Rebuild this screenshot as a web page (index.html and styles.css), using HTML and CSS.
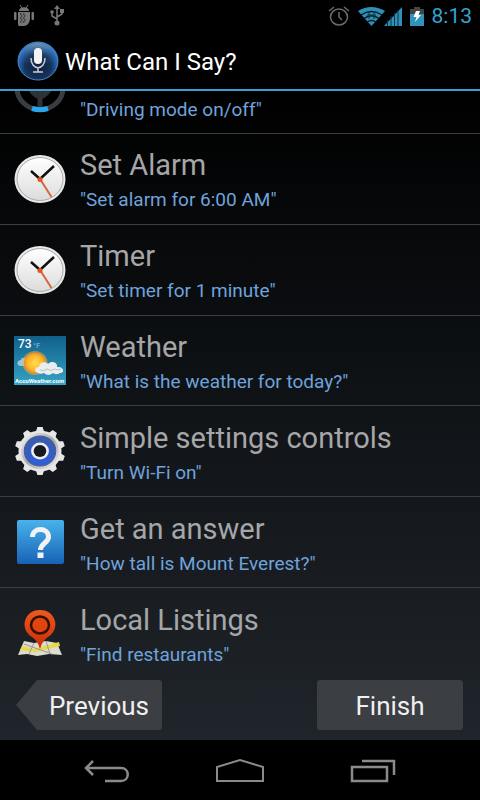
FILE: index.html
```html
<!DOCTYPE html>
<html lang="en">
<head>
    <meta charset="UTF-8">
    <meta name="viewport" content="width=device-width, initial-scale=1.0">
    <title>What Can I Say?</title>
    <link rel="stylesheet" href="styles.css">
</head>
<body>
    <div class="status-bar">
        <div class="status-left">
            <svg width="20" height="22" viewBox="0 0 20 22" fill="#777">
                <path d="M5 6c0-5 10-5 10 0z"/>
                <path d="M6 0l2 3M14 0l-2 3" stroke="#777"/>
                <rect x="0" y="7" width="2.5" height="8" rx="1"/>
                <rect x="17.500" y="7" width="2.500" height="8" rx="1"/>
                <path d="M4 7h12v6c0 5-3 8-6 8H5c-1 0-1-2-1-3z"/>
                <path d="M6 9h6M7 11h6M6 13h6M7 15h5M6 17h5" stroke="#111" stroke-dasharray="1.500 1.500"/>
            </svg>
            <svg width="14" height="21" viewBox="0 0 14 21" fill="none" stroke="#777" stroke-width="1.5">
                <path d="M7 3v15M7 14L2 11V8M7 12l5-3V6"/>
                <path d="M4 4l3-4 3 4z" fill="#777" stroke="none"/>
                <circle cx="7" cy="18" r="2.500" fill="#777" stroke="none"/>
                <circle cx="2" cy="7" r="1.800" fill="#777" stroke="none"/>
                <path d="M10 4h4v4h-4z" fill="#777" stroke="none"/>
            </svg>
        </div>
        <div class="status-right">
            <svg width="22" height="20" viewBox="0 0 22 20" fill="none" stroke="#6b6b6b" stroke-width="1.500">
                <ellipse cx="11" cy="11" rx="8.500" ry="8"/>
                <path d="M11 6v5l3 3M1 5l5-4M21 5l-5-4"/>
            </svg>
            <svg class="wifi" width="27" height="19" viewBox="0 0 27 19">
                <path d="M0 4Q13-4 27 4L13.500 19z" fill="#2f8fb5"/>
                <path d="M3 8q10.500-7 21 0M6 11.500q7.500-5.500 15 0M9 15q4.500-3 9 0" fill="none" stroke="#051820" stroke-width="1.300"/>
                <path d="M11 5v7M16 5v7M9 8h9" stroke="#0b3444" fill="none"/>
            </svg>
            <svg class="signal" width="18" height="19" viewBox="0 0 18 19">
                <path d="M0 19L18 0v19z" fill="#2f8fb5"/>
                <path d="M3.500 13v6M7 9v10M10.500 6v13M14 3v16" stroke="#0b3444"/>
            </svg>
            <svg width="14" height="19" viewBox="0 0 14 19">
                <path d="M4 0h6v2h4v5H0V2h4z" fill="#444"/>
                <path d="M0 7h14v12H0z" fill="#3193ba"/>
                <path d="M6 4h4L8.500 8H11l-6 7 1.500-5H3.500z" fill="#fff"/>
            </svg>
            <span class="clock">8:13</span>
        </div>
    </div>

    <header class="title-bar">
        <svg width="42" height="40" viewBox="0 0 42 40">
            <defs>
                <radialGradient id="micGlow" cx="50%" cy="65%" r="55%">
                    <stop offset="0" stop-color="#102038"/>
                    <stop offset=".6" stop-color="#15335c"/>
                    <stop offset="1" stop-color="#2c7fe0"/>
                </radialGradient>
                <linearGradient id="micGloss" x2="0" y2="1">
                    <stop offset="0" stop-color="#7796aa" stop-opacity=".9"/>
                    <stop offset=".6" stop-color="#34536b" stop-opacity=".2"/>
                </linearGradient>
            </defs>
            <ellipse cx="21" cy="20" rx="20" ry="19" fill="url(#micGlow)" stroke="#4a86bd"/>
            <path d="M3 20C3-4 39-4 39 20q-18 5-36 0z" fill="url(#micGloss)"/>
            <rect x="17" y="7" width="8" height="16" rx="4" fill="#f4f4f4"/>
            <path d="M14 17c0 13 14 13 14 0M21 27v4M16 31h10" fill="none" stroke="#ccd" stroke-width="1.500"/>
        </svg>
        <h1>What Can I Say?</h1>
    </header>

    <main class="screen">
        <ul class="command-list">
            <li class="command clipped">
                <svg class="icon" width="52" height="50" viewBox="0 0 52 50">
                    <ellipse cx="26" cy="25" rx="23" ry="21.500" fill="none" stroke="#3b3c3f" stroke-width="5"/>
                    <path d="M12 18h28q-1 14-14 19Q13 32 12 18z" fill="#303134"/>
                    <path d="M26 28v16" stroke="#303134" stroke-width="5"/>
                    <path d="M18 45.500q8 2.500 16 0" fill="none" stroke="#2ba6ee" stroke-width="5"/>
                </svg>
                <p>"Driving mode on/off"</p>
            </li>
            <li class="command">
                <svg class="icon" width="52" height="50" viewBox="0 0 52 50">
                    <defs>
                        <linearGradient id="clockFace" x2="0" y2="1">
                            <stop offset="0" stop-color="#fff"/>
                            <stop offset="1" stop-color="#dcdcdc"/>
                        </linearGradient>
                    </defs>
                    <ellipse cx="26" cy="25" rx="25.500" ry="24" fill="#e9e9e9"/>
                    <ellipse cx="26" cy="25" rx="23" ry="21.500" fill="url(#clockFace)" stroke="#aaa"/>
                    <path d="M17 17l9 8 14-13" fill="none" stroke="#111" stroke-width="2.500"/>
                    <path d="M26 25l11.500 18" stroke="#d4663a" stroke-width="2"/>
                    <circle cx="26" cy="25.500" r="2.500" fill="#e0561c"/>
                </svg>
                <div class="text">
                    <h2>Set Alarm</h2>
                    <p>"Set alarm for 6:00 AM"</p>
                </div>
            </li>
            <li class="command">
                <svg class="icon" width="52" height="50" viewBox="0 0 52 50">
                    <ellipse cx="26" cy="25" rx="25.500" ry="24" fill="#e9e9e9"/>
                    <ellipse cx="26" cy="25" rx="23" ry="21.500" fill="url(#clockFace)" stroke="#aaa"/>
                    <path d="M17 17l9 8 14-13" fill="none" stroke="#111" stroke-width="2.500"/>
                    <path d="M26 25l11.500 18" stroke="#d4663a" stroke-width="2"/>
                    <circle cx="26" cy="25.500" r="2.500" fill="#e0561c"/>
                </svg>
                <div class="text">
                    <h2>Timer</h2>
                    <p>"Set timer for 1 minute"</p>
                </div>
            </li>
            <li class="command">
                <svg class="icon" width="52" height="50" viewBox="0 0 52 50">
                    <defs>
                        <linearGradient id="sky" x2="0" y2="1">
                            <stop offset="0" stop-color="#10608b"/>
                            <stop offset="1" stop-color="#36a3c4"/>
                        </linearGradient>
                        <radialGradient id="sun">
                            <stop offset="0" stop-color="#ffe052"/>
                            <stop offset=".7" stop-color="#fdb52a"/>
                            <stop offset="1" stop-color="#f08a16"/>
                        </radialGradient>
                    </defs>
                    <rect width="52" height="49" fill="url(#sky)"/>
                    <path d="M12 30H6c-4-1-3-6 1-6 0-3 5-3 6 0z" fill="#9cc7d8"/>
                    <ellipse cx="21" cy="27" rx="12.500" ry="12" fill="#f5b545" opacity=".5"/>
                    <ellipse cx="21" cy="27" rx="11" ry="10.500" fill="url(#sun)"/>
                    <path d="M24 37c-4-1-4-6 1-6 0-5 7-6 9-3 4-4 10-1 9 3 7-1 8 6 3 6-3 2-6 1-7 0-4 3-7 2-9 0-2 1-4 1-6 0z" fill="#e9edf0"/>
                    <path d="M26 34q4 2 7-1 4 3 8 0 3 2 6 0" fill="none" stroke="#b9c5cb"/>
                    <text class="icon-temp" x="4" y="12">73</text>
                    <text class="icon-unit" x="19" y="12">°F</text>
                    <text class="icon-brand" x="1" y="47">AccuWeather.com</text>
                </svg>
                <div class="text">
                    <h2>Weather</h2>
                    <p>"What is the weather for today?"</p>
                </div>
            </li>
            <li class="command">
                <svg class="icon" width="52" height="50" viewBox="0 0 52 50">
                    <defs>
                        <linearGradient id="gearRing" x2="1" y2="1">
                            <stop offset="0" stop-color="#f4f4f4"/>
                            <stop offset=".5" stop-color="#aaa"/>
                            <stop offset="1" stop-color="#eee"/>
                        </linearGradient>
                        <linearGradient id="gearBlue" x2="0" y2="1">
                            <stop offset="0" stop-color="#3c5cab"/>
                            <stop offset="1" stop-color="#305edb"/>
                        </linearGradient>
                    </defs>
                    <g transform="translate(26 25) scale(1.050 1)" fill="#e6e6e6">
                        <circle r="20.500"/>
                        <path id="teeth" d="M-4-19l1.500-5h5l1.500 5v38l-1.500 5h-5l-1.500-5z"/>
                        <use href="#teeth" transform="rotate(36)"/>
                        <use href="#teeth" transform="rotate(72)"/>
                        <use href="#teeth" transform="rotate(108)"/>
                        <use href="#teeth" transform="rotate(144)"/>
                        <circle r="18" fill="url(#gearRing)"/>
                        <circle r="15" fill="url(#gearBlue)" stroke="#4c5c86"/>
                        <circle r="8.500" fill="#eee"/>
                        <circle r="6" fill="#17191c"/>
                    </g>
                </svg>
                <div class="text">
                    <h2>Simple settings controls</h2>
                    <p>"Turn Wi-Fi on"</p>
                </div>
            </li>
            <li class="command">
                <svg class="icon" width="52" height="50" viewBox="0 0 52 50">
                    <defs>
                        <linearGradient id="askBlue" x2="0" y2="1">
                            <stop offset="0" stop-color="#48b3ed"/>
                            <stop offset="1" stop-color="#1763b5"/>
                        </linearGradient>
                    </defs>
                    <rect x="3" y="3" width="47" height="44" rx="2" fill="url(#askBlue)"/>
                    <path d="M18.500 20c0-10 16-10 16 0 0 6-8 6-8 13" fill="none" stroke="#f2f2f2" stroke-width="5"/>
                    <path d="M23.500 35.500h6V41h-6z" fill="#f2f2f2"/>
                </svg>
                <div class="text">
                    <h2>Get an answer</h2>
                    <p>"How tall is Mount Everest?"</p>
                </div>
            </li>
            <li class="command">
                <svg class="icon" width="52" height="50" viewBox="0 0 52 50">
                    <defs>
                        <linearGradient id="pinRed" x2="0" y2="1">
                            <stop offset="0" stop-color="#ee5a1c"/>
                            <stop offset="1" stop-color="#c92a08"/>
                        </linearGradient>
                    </defs>
                    <path d="M10 33l10 2 12-2 11 2 5 12-13-1-12 2-10-2-9 1z" fill="#dcdccf"/>
                    <path d="M8 38l12 3 25-7 1 4-24 6-16-2z" fill="#e6d94a"/>
                    <path d="M20 35l-5 11M32 33l4 13M10 36l28 10" fill="none" stroke="#999" stroke-width="1"/>
                    <path d="M26 41q-2-8-8-12C5 21 10 2 26 2s21 19 8 27q-6 4-8 12z" fill="url(#pinRed)"/>
                    <ellipse cx="26" cy="17" rx="9" ry="8.500" fill="#e2440f" stroke="#351007" stroke-width="2.500"/>
                </svg>
                <div class="text">
                    <h2>Local Listings</h2>
                    <p>"Find restaurants"</p>
                </div>
            </li>
        </ul>

        <div class="actions">
            <button type="button" class="btn btn-prev">Previous</button>
            <button type="button" class="btn">Finish</button>
        </div>
    </main>

    <nav class="nav-bar">
        <button type="button" aria-label="Back">
            <svg width="46" height="26" viewBox="0 0 46 26" fill="none" stroke="#8a8a8a" stroke-width="2.500">
                <path d="M9 3L2 10l7 7M3 10h34c9 0 9 13 0 13H21"/>
            </svg>
        </button>
        <button type="button" aria-label="Home">
            <svg width="50" height="26" viewBox="0 0 50 26" fill="none" stroke="#8a8a8a" stroke-width="2">
                <path d="M2 23V9l23-7 23 7v14z"/>
            </svg>
        </button>
        <button type="button" aria-label="Recent apps">
            <svg width="46" height="26" viewBox="0 0 46 26" fill="none" stroke="#8a8a8a" stroke-width="2.500">
                <path d="M2 9h35v14H2zM12 3h32v14"/>
            </svg>
        </button>
    </nav>
</body>
</html>
```

FILE: styles.css
```css
body {
    font-family: Roboto, "Noto Sans", sans-serif;
    margin: 0;
    min-height: 100vh;
    display: flex;
    flex-direction: column;
    background-color: #000;
    color: #fff;
}
h1, h2, p, ul {
    margin: 0;
    padding: 0;
    font-weight: 400;
}
svg {
    display: block;
    flex: none;
}

/* status bar */
.status-bar {
    height: 32px;
    padding: 0 8px 0 14px;
    display: flex;
    justify-content: space-between;
    align-items: center;
}
.status-left {
    display: flex;
    gap: 16px;
}
.status-right {
    display: flex;
    align-items: center;
    gap: 8px;
}
.signal {
    margin-left: -9px;
}
.clock {
    font-size: 21px;
    line-height: 32px;
    color: #33a5d2;
}

/* title */
.title-bar {
    height: 57px;
    padding-left: 17px;
    display: flex;
    align-items: center;
    gap: 6px;
    border-bottom: 2px solid #3a9fd0;
}
.title-bar h1 {
    padding-top: 2px;
    font-size: 24px;
    line-height: 32px;
}

/* command list */
.screen {
    flex: 1;
    display: flex;
    flex-direction: column;
    background: linear-gradient(#000, #0d1013 40%, #20252b);
}
.command-list {
    flex: 1;
    display: flex;
    flex-direction: column;
    list-style: none;
}
.command {
    flex: 1;
    padding: 0 14px;
    display: flex;
    align-items: center;
    gap: 14px;
    border-bottom: 1px solid #3c3e41;
}
.command:last-child {
    border-bottom: none;
}
.text {
    padding-top: 4px;
}
.command h2 {
    font-size: 29px;
    line-height: 38px;
    color: #a6a6a8;
}
.command p {
    font-size: 19px;
    line-height: 31px;
    color: #6fa3dc;
}

/* first row, scrolled half under the title */
.clipped {
    flex: none;
    height: 42px;
    align-items: flex-end;
    overflow: hidden;
}
.clipped .icon {
    margin-bottom: 20px;
}
.clipped p {
    margin-bottom: 8px;
}

/* weather icon labels */
.icon-temp {
    font-size: 12px;
    font-weight: 500;
    fill: #fff;
}
.icon-unit {
    font-size: 8px;
    fill: #8fc0d6;
}
.icon-brand {
    font-size: 6px;
    font-weight: 700;
    fill: #fff;
}

/* buttons */
.actions {
    padding: 2px 17px 10px 16px;
    display: flex;
    justify-content: space-between;
}
.btn {
    min-width: 146px;
    height: 50px;
    padding: 2px 0 0;
    border: none;
    border-radius: 3px;
    background-color: #3b3e43;
    color: #f0f0f0;
    font-family: inherit;
    font-size: 26px;
}
.btn-prev {
    padding-left: 20px;
    clip-path: polygon(0 50%, 21px 0, 100% 0, 100% 100%, 21px 100%);
}

/* system navigation */
.nav-bar {
    height: 60px;
    padding: 0 40px;
    display: flex;
    background-color: #000;
}
.nav-bar button {
    flex: 1;
    padding: 2px 0 0;
    border: none;
    background: none;
    display: flex;
    justify-content: center;
    align-items: center;
}
```
